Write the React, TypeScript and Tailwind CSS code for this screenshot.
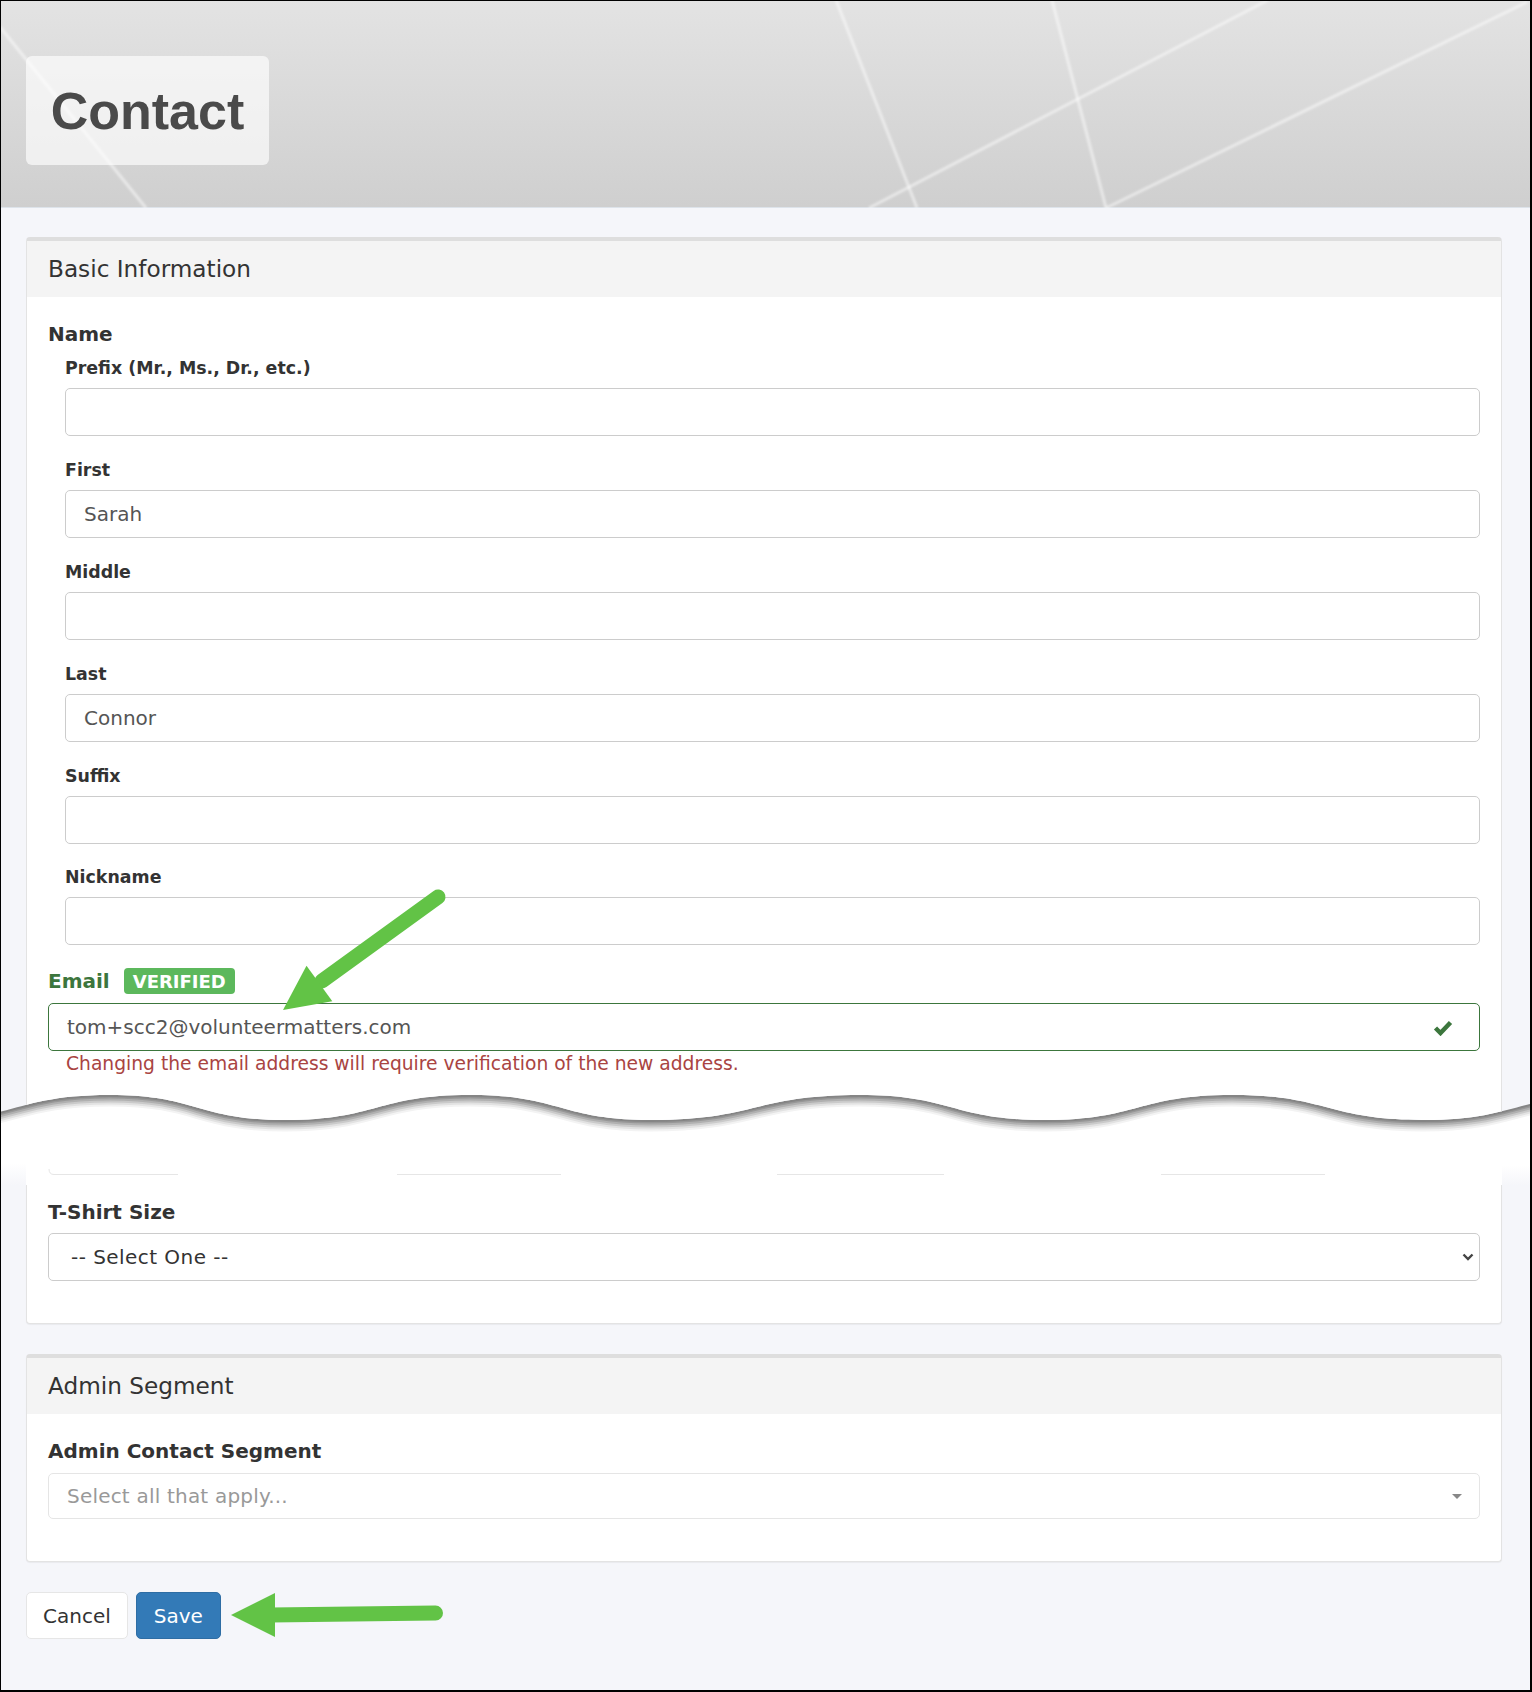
import React from 'react';

const WAVE =
  'M-75,1120 C16,1120 16,1095 110,1095 C197,1095 197,1120 285,1120 C377,1120 377,1095 470,1095 ' +
  'C560,1095 560,1120 650,1120 C755,1120 755,1095 860,1095 C952,1095 952,1120 1045,1120 ' +
  'C1138,1120 1138,1095 1232,1095 C1327,1095 1327,1120 1423,1120 C1516,1120 1516,1095 1610,1095';

function HeaderLines() {
  return (
    <svg className="absolute left-0 top-0" width={1529} height={207} viewBox="1 1 1529 207">
      <defs>
        <filter id="soft" x="-5%" y="-5%" width="110%" height="110%">
          <feGaussianBlur stdDeviation="0.8" />
        </filter>
      </defs>
      <g stroke="#ffffff" strokeOpacity={0.5} strokeWidth={3} fill="none" filter="url(#soft)">
        <line x1={836} y1={0} x2={917} y2={208} />
        <line x1={1052} y1={0} x2={1106} y2={208} />
        <line x1={1268} y1={0} x2={869} y2={208} />
        <line x1={1527} y1={2} x2={1106} y2={208} />
        <line x1={0} y1={27} x2={146} y2={208} />
      </g>
    </svg>
  );
}

function Field({ label, value = '' }: { label: string; value?: string }) {
  return (
    <div className="mb-[21.9px]">
      <label className="mb-[8px] block text-[17.4px] font-bold leading-[24px] text-[#333]">{label}</label>
      <input
        readOnly
        value={value}
        className="block h-[48px] w-full rounded-[5px] border border-[#ccc] bg-white px-[18px] text-[20px] text-[#555] outline-none"
      />
    </div>
  );
}

function PanelHeading({ title }: { title: string }) {
  return (
    <div className="flex h-[56px] items-center bg-[#f4f4f4] px-[21px] text-[23.2px] text-[#333]">{title}</div>
  );
}

// torn paper edge between the email field and the t-shirt field
function Tear() {
  const shadow = [
    { dy: 10, c: '#f3f3f3' },
    { dy: 8, c: '#e2e2e2' },
    { dy: 6, c: '#cacaca' },
    { dy: 4, c: '#b0b0b0' },
    { dy: 2, c: '#979797' },
    { dy: 0.5, c: '#858585' },
  ];
  return (
    <svg className="block" width={1529} height={100} viewBox="1 1085 1529 100">
      <defs>
        <clipPath id="upper">
          <path d={`${WAVE} L1610,1080 L-75,1080 Z`} />
        </clipPath>
        <linearGradient id="fade" x1="0" y1="0" x2="0" y2="1">
          <stop offset="0" stopColor="#ffffff" />
          <stop offset="1" stopColor="#f5f6fa" />
        </linearGradient>
      </defs>
      <rect x={0} y={1080} width={1540} height={110} fill="#ffffff" />
      <rect x={0} y={1163} width={26} height={22} fill="url(#fade)" />
      <rect x={1502} y={1165} width={30} height={20} fill="url(#fade)" />
      <g stroke="#e6e6e6" strokeWidth={1} fill="none">
        <path d="M49,1169 Q49,1174.5 54,1174.5 L178,1174.5" />
        <line x1={397} y1={1174.5} x2={561} y2={1174.5} />
        <line x1={777} y1={1174.5} x2={944} y2={1174.5} />
        <line x1={1161} y1={1174.5} x2={1325} y2={1174.5} />
      </g>
      {shadow.map((s) => (
        <path key={s.dy} d={WAVE} transform={`translate(0 ${s.dy})`} stroke={s.c} strokeWidth={3} fill="none" />
      ))}
      <g clipPath="url(#upper)">
        <rect x={0} y={1080} width={1540} height={110} fill="#f5f6fa" />
        <rect x={26} y={1080} width={1476} height={110} fill="#ffffff" />
        <line x1={26.5} y1={1080} x2={26.5} y2={1190} stroke="#e3e3e3" />
        <line x1={1501.5} y1={1080} x2={1501.5} y2={1190} stroke="#e3e3e3" />
      </g>
    </svg>
  );
}

function Arrows() {
  const green = '#62c346';
  return (
    <svg
      className="pointer-events-none absolute left-0 top-0"
      width={1529}
      height={1689}
      viewBox="1 1 1529 1689"
    >
      <line x1={438} y1={897} x2={322} y2={981} stroke={green} strokeWidth={15} strokeLinecap="round" />
      <polygon points="283,1010 306.5,965.7 332.3,1001.3" fill={green} />
      <line x1={435.5} y1={1613} x2={270} y2={1615} stroke={green} strokeWidth={15} strokeLinecap="round" />
      <polygon points="231,1615 275,1593 275,1637" fill={green} />
    </svg>
  );
}

export default function App() {
  return (
    <div className="relative h-[1692px] w-[1532px] overflow-hidden border-b-2 border-l border-r-2 border-t border-black bg-[#f5f6fa] font-['DejaVu_Sans',sans-serif] text-[#333]">
      <header className="relative h-[207px] border-b border-[#dde3ea] bg-linear-to-b from-[#e3e3e3] to-[#cfcfcf] pl-[25px] pt-[55px]">
        <HeaderLines />
        <div className="relative flex h-[109px] w-[243px] items-center justify-center rounded-[6px] bg-white/65">
          <h1 className="font-['Liberation_Sans',Arial,sans-serif] text-[52px] font-bold text-[#4a4a4a]">Contact</h1>
        </div>
      </header>

      <div className="pt-[29px]">
        <section className="ml-[25px] mr-[28px] rounded-t-[4px] border-x border-t-4 border-x-[#e3e3e3] border-t-[#dedede] bg-white">
          <PanelHeading title="Basic Information" />
          <div className="px-[21px] pb-[9px] pt-[23px]">
            <div className="mb-[8px] text-[20px] font-bold leading-[28px]">Name</div>
            <div className="pl-[17px]">
              <Field label="Prefix (Mr., Ms., Dr., etc.)" />
              <Field label="First" value="Sarah" />
              <Field label="Middle" />
              <Field label="Last" value="Connor" />
              <Field label="Suffix" />
              <Field label="Nickname" />
            </div>

            <div className="mb-[8px] mt-[2px] flex h-[28px] items-center gap-[14px]">
              <span className="text-[20px] font-bold text-[#3c763d]">Email</span>
              <span className="flex h-[26px] items-center rounded-[4px] bg-[#5cb85c] px-[9px] pt-[1px] text-[18px] font-bold leading-none text-white">
                VERIFIED
              </span>
            </div>
            <div className="flex h-[48px] items-center rounded-[5px] border border-[#3c763d] bg-white pl-[18px] pr-[26px]">
              <span className="flex-1 text-[20px] text-[#555]">tom+scc2@volunteermatters.com</span>
              <svg width={20} height={17} viewBox="0 0 20 17">
                <polyline points="2.5,9 7.5,14 17.5,3.5" fill="none" stroke="#3c763d" strokeWidth={4.5} />
              </svg>
            </div>
            <p className="ml-[18px] mt-[1px] text-[18.7px] leading-[24px] text-[#a94442]">
              Changing the email address will require verification of the new address.
            </p>
          </div>
        </section>

        <Tear />

        <section className="ml-[25px] mr-[28px] rounded-b-[4px] border-x border-b border-[#e3e3e3] bg-white px-[21px] pb-[42px] pt-[13px] shadow-[0_1px_1px_rgba(0,0,0,0.05)]">
          <div className="mb-[7px] text-[20px] font-bold leading-[28px]">T-Shirt Size</div>
          <div className="flex h-[48px] items-center justify-between rounded-[5px] border border-[#ccc] bg-white pl-[22px] pr-[5px]">
            <span className="text-[20px] tracking-[0.45px] text-[#333]">-- Select One --</span>
            <svg width={12} height={8} viewBox="0 0 12 8">
              <polyline points="1.5,1.5 6,6 10.5,1.5" fill="none" stroke="#444" strokeWidth={2.4} />
            </svg>
          </div>
        </section>

        <section className="ml-[25px] mr-[28px] mt-[30px] rounded-[4px] border-x border-b border-t-4 border-x-[#e3e3e3] border-b-[#e3e3e3] border-t-[#dedede] bg-white shadow-[0_1px_1px_rgba(0,0,0,0.05)]">
          <PanelHeading title="Admin Segment" />
          <div className="px-[21px] pb-[42px] pt-[23px]">
            <div className="mb-[8px] text-[20px] font-bold leading-[28px]">Admin Contact Segment</div>
            <div className="flex h-[46px] items-center justify-between rounded-[5px] border border-[#e5e5e5] bg-white pl-[18px] pr-[17px]">
              <span className="text-[20px] tracking-[0.2px] text-[#999]">Select all that apply...</span>
              <svg width={10} height={5} viewBox="0 0 10 5">
                <polygon points="0,0 10,0 5,5" fill="#888" />
              </svg>
            </div>
          </div>
        </section>

        <div className="ml-[25px] mt-[30px] flex gap-[8px]">
          <button className="h-[47px] rounded-[5px] border border-[#e6e6e6] bg-white px-[16px] text-[20px] text-[#333]">
            Cancel
          </button>
          <button className="h-[47px] rounded-[5px] border border-[#2e6da4] bg-[#337ab7] px-[17px] text-[20px] text-white">
            Save
          </button>
        </div>
      </div>

      <Arrows />
    </div>
  );
}
